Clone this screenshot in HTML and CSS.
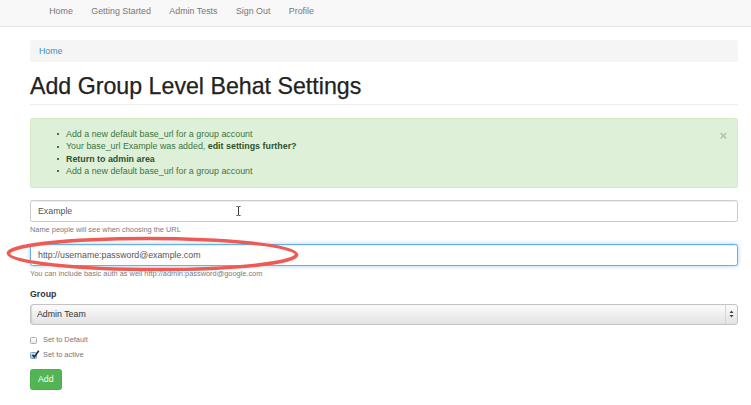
FILE: index.html
```html
<!DOCTYPE html>
<html lang="en">
<head>
<meta charset="utf-8">
<title>Add Group Level Behat Settings</title>
<link rel="stylesheet" href="styles.css">
</head>
<body>
<nav class="navbar">
  <ul class="nav">
    <li><a href="#">Home</a></li>
    <li><a href="#">Getting Started</a></li>
    <li><a href="#">Admin Tests</a></li>
    <li><a href="#">Sign Out</a></li>
    <li><a href="#">Profile</a></li>
  </ul>
</nav>
<div class="container">
  <div class="breadcrumb"><a href="#">Home</a></div>
  <h1 class="page-header">Add Group Level Behat Settings</h1>
  <div class="alert">
    <ul class="alert-list">
      <li>Add a new default base_url for a group account</li>
      <li>Your base_url Example was added, <a class="alert-link" href="#">edit settings further?</a></li>
      <li><a class="alert-link" href="#">Return to admin area</a></li>
      <li>Add a new default base_url for a group account</li>
    </ul>
    <span class="close">&times;</span>
  </div>
  <form class="form">
    <div class="form-group">
      <div class="input-wrap">
        <div class="form-control">Example</div>
        <svg class="ibeam" width="5" height="10" viewBox="0 0 5 10"><path d="M0.5 0.5h1.3M3.2 0.5h1.3M2.5 1v8M0.5 9.5h1.3M3.2 9.5h1.3M1.8 0.5l0.7 0.5 0.7-0.5M1.8 9.5l0.7-0.5 0.7 0.5" stroke="#222" stroke-width="0.9" fill="none"/></svg>
      </div>
      <p class="help-block">Name people will see when choosing the URL</p>
    </div>
    <div class="form-group">
      <div class="input-wrap">
        <div class="form-control focus">http://username:password@example.com</div>
        <svg class="ellipse" width="310" height="44" viewBox="0 0 310 44"><ellipse cx="152.5" cy="22" rx="144" ry="15.5" transform="translate(152.5 22) skewX(18) translate(-152.5 -22)" fill="none" stroke="#ef5b52" stroke-width="3.4"/></svg>
      </div>
      <p class="help-block">You can include basic auth as well http://admin:password@google.com</p>
    </div>
    <div class="form-group">
      <label class="label">Group</label>
      <div class="select">
        <span class="select-text">Admin Team</span>
        <span class="select-arrows"><svg width="5" height="8" viewBox="0 0 5 8"><path d="M2.5 0.5L4.5 3H0.5Z M2.5 7.5L4.5 5H0.5Z" fill="#444"/></svg></span>
      </div>
    </div>
    <div class="checks">
      <label class="check"><span class="box"></span>Set to Default</label>
      <label class="check"><span class="box checked"><svg width="9" height="9" viewBox="0 0 9 9"><path d="M1.5 4.8L3.3 7L7.8 0.8" stroke="#1f2d3d" stroke-width="1.6" fill="none"/></svg></span>Set to active</label>
    </div>
    <button type="button" class="btn">Add</button>
  </form>
</div>
</body>
</html>
```
FILE: styles.css
```css
* { box-sizing: border-box; }
body {
  margin: 0;
  font-family: "Liberation Sans", Arial, Helvetica, sans-serif;
  font-size: 8.8px;
  color: #333;
  background: #fff;
}
a { text-decoration: none; }

.navbar {
  height: 27px;
  background: #f8f8f8;
  border-bottom: 1px solid #e7e7e7;
}
.nav {
  list-style: none;
  margin: 0;
  padding: 5px 0 0 40px;
  display: flex;
}
.nav a {
  display: block;
  padding: 0 9.2px;
  line-height: 12px;
  color: #777;
  font-size: 8.9px;
}

.container {
  padding: 0 13px 0 30px;
}

.breadcrumb {
  margin-top: 13px;
  background: #f5f5f5;
  border-radius: 2.5px;
  padding: 5px 9px;
  line-height: 12px;
}
.breadcrumb a { color: #428bca; }

.page-header {
  margin: 12px 0 0;
  font-size: 23.2px;
  font-weight: normal;
  line-height: 25px;
  padding-bottom: 5px;
  border-bottom: 1px solid #eee;
  color: #222;
  -webkit-text-stroke: 0.25px #222;
}

.alert {
  margin-top: 13px;
  display: flex;
  align-items: flex-start;
  background: #dff0d8;
  border: 1px solid #d6e9c6;
  border-radius: 2.5px;
  padding: 9px 10px 9px 9px;
  color: #3c763d;
}
.alert-list {
  flex: 1;
  margin: 0;
  padding-left: 17px;
  line-height: 12.4px;
  font-size: 8.9px;
  list-style: none;
}
.alert-list li::before {
  content: "";
  display: inline-block;
  width: 2px;
  height: 2px;
  background: #3c763d;
  vertical-align: middle;
  margin: 0 7px 1px 0;
}
.alert-link { color: #2b542c; font-weight: bold; }
.close {
  font-size: 13px;
  font-weight: bold;
  line-height: 12px;
  color: #000;
  opacity: .2;
  margin-top: 2px;
}

.form { margin-top: 12px; }
.form-group { margin-bottom: 9px; }
.input-wrap { position: relative; }
.form-control {
  height: 22px;
  border: 1px solid #ccc;
  border-radius: 2.5px;
  padding: 0 7px;
  line-height: 20px;
  color: #555;
  font-size: 8.8px;
  background: #fff;
  box-shadow: inset 0 1px 1px rgba(0,0,0,.075);
}
.form-control.focus {
  border-color: #66afe9;
  box-shadow: inset 0 1px 1px rgba(0,0,0,.075), 0 0 4px rgba(102,175,233,.6);
}
.ibeam {
  position: absolute;
  left: 206px;
  top: 6px;
}
.ellipse {
  position: absolute;
  left: -30px;
  top: -12px;
  pointer-events: none;
}
.help-block {
  margin: 3px 0 0;
  font-size: 7.4px;
  line-height: 10px;
  color: #7b7b7b;
}
.label {
  display: block;
  font-weight: bold;
  line-height: 12px;
  margin-bottom: 4px;
  font-size: 8.8px;
}
.select {
  height: 21px;
  display: flex;
  align-items: center;
  border: 1px solid #c4c4c4;
  border-radius: 3px;
  background: linear-gradient(to bottom, #fcfcfc, #eaeaea 70%, #e4e4e4);
  box-shadow: inset 1px 0 1px rgba(0,0,0,.12);
  color: #333;
}
.select-text {
  flex: 1;
  padding-left: 6px;
  font-size: 8.8px;
}
.select-arrows {
  display: flex;
  align-items: center;
  justify-content: center;
  width: 12px;
  height: 100%;
  border-left: 1px solid #d4d4d4;
}

.checks {
  display: flex;
  flex-direction: column;
  gap: 3px;
}
.check {
  display: flex;
  align-items: center;
  height: 12px;
  font-size: 7.4px;
  color: #777;
}
.box {
  position: relative;
  width: 7px;
  height: 7px;
  margin: 1px 6px 0 0;
  border: 1px solid #aaa;
  border-radius: 1.5px;
  background: linear-gradient(#fff, #ececec);
}
.box.checked {
  background: linear-gradient(#d6e4f5, #9fbde3);
  border-color: #7f9bbf;
}
.box svg {
  position: absolute;
  left: -0.5px;
  top: -3px;
}

.btn {
  margin-top: 8px;
  height: 21px;
  padding: 0 7px;
  font-family: inherit;
  font-size: 8.8px;
  color: #fff;
  background: #53b453;
  border: 1px solid #4cae4c;
  border-radius: 2.5px;
}
```
